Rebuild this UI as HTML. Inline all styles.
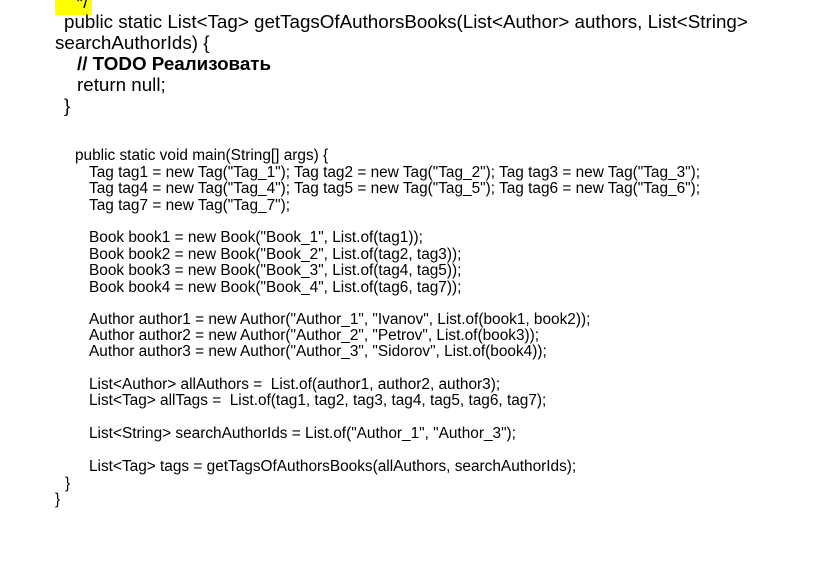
<!DOCTYPE html>
<html><head><meta charset="utf-8"><style>
body{margin:0;width:824px;height:561px;background:#fff;position:relative;overflow:hidden;font-family:"Liberation Sans","Noto Sans CJK SC",sans-serif;color:#000}
.l{position:absolute;white-space:pre;line-height:1}
.a{font-size:18.8px}
.b{font-size:15.4px}
</style></head><body>
<div style="position:absolute;left:55px;top:0;width:37px;height:15px;background:#ffff00"></div>
<div class="l a" style="left:76px;top:-7px">*/</div>
<div class="l a" style="left:64px;top:13px">public static List&lt;Tag&gt; getTagsOfAuthorsBooks(List&lt;Author&gt; authors, List&lt;String&gt;</div>
<div class="l a" style="left:55px;top:34px">searchAuthorIds) {</div>
<div class="l a" style="left:77px;top:55px;font-weight:bold">// TODO Реализовать</div>
<div class="l a" style="left:77px;top:76px">return null;</div>
<div class="l a" style="left:64px;top:97px">}</div>
<div class="l b" style="left:75px;top:148px">public static void main(String[] args) {</div>
<div class="l b" style="left:89px;top:165px">Tag tag1 = new Tag("Tag_1"); Tag tag2 = new Tag("Tag_2"); Tag tag3 = new Tag("Tag_3");</div>
<div class="l b" style="left:89px;top:181px">Tag tag4 = new Tag("Tag_4"); Tag tag5 = new Tag("Tag_5"); Tag tag6 = new Tag("Tag_6");</div>
<div class="l b" style="left:89px;top:198px">Tag tag7 = new Tag("Tag_7");</div>
<div class="l b" style="left:89px;top:230px">Book book1 = new Book("Book_1", List.of(tag1));</div>
<div class="l b" style="left:89px;top:247px">Book book2 = new Book("Book_2", List.of(tag2, tag3));</div>
<div class="l b" style="left:89px;top:263px">Book book3 = new Book("Book_3", List.of(tag4, tag5));</div>
<div class="l b" style="left:89px;top:280px">Book book4 = new Book("Book_4", List.of(tag6, tag7));</div>
<div class="l b" style="left:89px;top:312px">Author author1 = new Author("Author_1", "Ivanov", List.of(book1, book2));</div>
<div class="l b" style="left:89px;top:328px">Author author2 = new Author("Author_2", "Petrov", List.of(book3));</div>
<div class="l b" style="left:89px;top:344px">Author author3 = new Author("Author_3", "Sidorov", List.of(book4));</div>
<div class="l b" style="left:89px;top:377px">List&lt;Author&gt; allAuthors =  List.of(author1, author2, author3);</div>
<div class="l b" style="left:89px;top:393px">List&lt;Tag&gt; allTags =  List.of(tag1, tag2, tag3, tag4, tag5, tag6, tag7);</div>
<div class="l b" style="left:89px;top:426px">List&lt;String&gt; searchAuthorIds = List.of("Author_1", "Author_3");</div>
<div class="l b" style="left:89px;top:459px">List&lt;Tag&gt; tags = getTagsOfAuthorsBooks(allAuthors, searchAuthorIds);</div>
<div class="l b" style="left:65px;top:476px">}</div>
<div class="l b" style="left:55px;top:492px">}</div>
</body></html>
